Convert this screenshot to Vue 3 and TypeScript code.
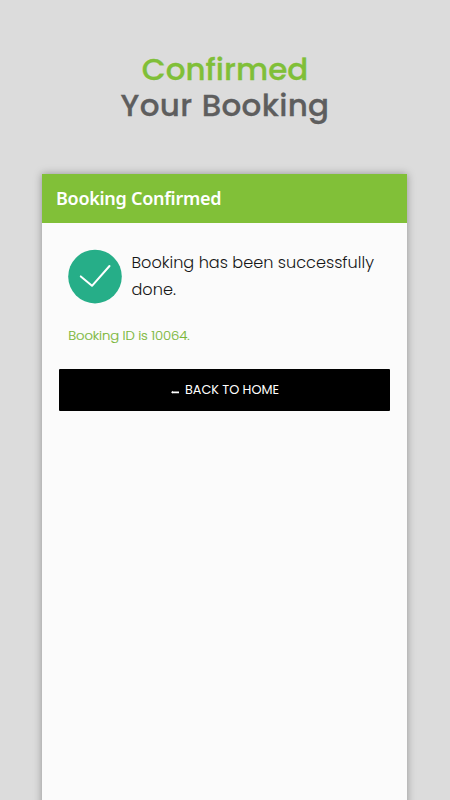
<script setup lang="ts">
const bookingId: number = 10064
</script>

<template>
  <main class="page">
    <h1 class="title">
      <span class="title-accent">Confirmed</span><br />
      <span class="title-main">Your Booking</span>
    </h1>
    <section class="screen">
      <header class="bar"><span class="bar-text">Booking Confirmed</span></header>
      <div class="message">
        <svg class="check" viewBox="0 0 54 54" aria-hidden="true">
          <circle cx="27" cy="27.6" r="26.8" fill="#26ae88" />
          <path d="M12.8 27.4 24 36.8 41.5 17" fill="none" stroke="#fff" stroke-width="2" stroke-linecap="round" stroke-linejoin="round" />
        </svg>
        <p class="message-text">Booking has been successfully<br />done.</p>
      </div>
      <p class="booking-id"><span>Booking ID is {{ bookingId }}.</span></p>
      <button class="home" type="button">
        <svg class="arrow" viewBox="0 0 10 6" aria-hidden="true">
          <path d="M1 3.3 3 1.8V2.5H9V4.2H3V4.8Z" fill="#fff" />
        </svg>
        <span class="home-text">BACK TO HOME</span>
      </button>
    </section>
  </main>
</template>

<style>
body {
  margin: 0;
  background: #dcdcdc;
}
</style>

<style scoped>
.page {
  box-sizing: border-box;
  height: 800px;
  padding-top: 51px;
  overflow: hidden;
  background: #dcdcdc;
  font-family: Poppins, Inter, sans-serif;
}
.title {
  height: 123px;
  margin: 0;
  text-align: center;
  font-size: 31px;
  font-weight: 500;
  line-height: 36px;
}
.title-accent {
  color: #80bf38;
  -webkit-text-stroke: 0.3px #80bf38;
}
.title-main {
  color: #5e5e5e;
  letter-spacing: 0.3px;
  word-spacing: 1px;
  -webkit-text-stroke: 0.3px #5e5e5e;
}
.screen {
  width: 365px;
  height: 640px;
  margin-left: 42px;
  background: #fbfbfb;
  box-shadow: 0 0 8px rgba(0, 0, 0, 0.34);
}
.bar {
  box-sizing: border-box;
  display: flex;
  align-items: center;
  height: 49px;
  padding: 0 0 2px 14px;
  background: #81c038;
  color: #fff;
  font-family: "Noto Sans", sans-serif;
  font-size: 18px;
  font-weight: 600;
  letter-spacing: -0.28px;
}
.message {
  display: flex;
  gap: 10px;
  padding: 26px 0 0 26px;
}
.check {
  width: 54px;
  height: 54px;
  overflow: visible;
}
.message-text {
  margin: 0 0 0 -0.5px;
  color: #161616;
  font-size: 16.1px;
  font-weight: 300;
  line-height: 27px;
  white-space: nowrap;
}
.booking-id {
  margin: 23px 0 0 26.3px;
  color: #79b637;
  font-size: 13.2px;
  font-weight: 300;
  line-height: 20px;
  letter-spacing: -0.1px;
  -webkit-text-stroke: 0.15px #79b637;
}
.home {
  display: flex;
  align-items: center;
  justify-content: center;
  gap: 5px;
  width: 331px;
  height: 42px;
  margin: 23px 0 0 17px;
  padding: 0;
  border: 0;
  border-radius: 1px;
  background: #000;
  color: #fff;
  font-family: inherit;
  font-size: 12.8px;
  font-weight: 400;
}
.home-text {
  letter-spacing: -0.04px;
}
.arrow {
  width: 10px;
  height: 6px;
  margin-top: 3px;
}
</style>
